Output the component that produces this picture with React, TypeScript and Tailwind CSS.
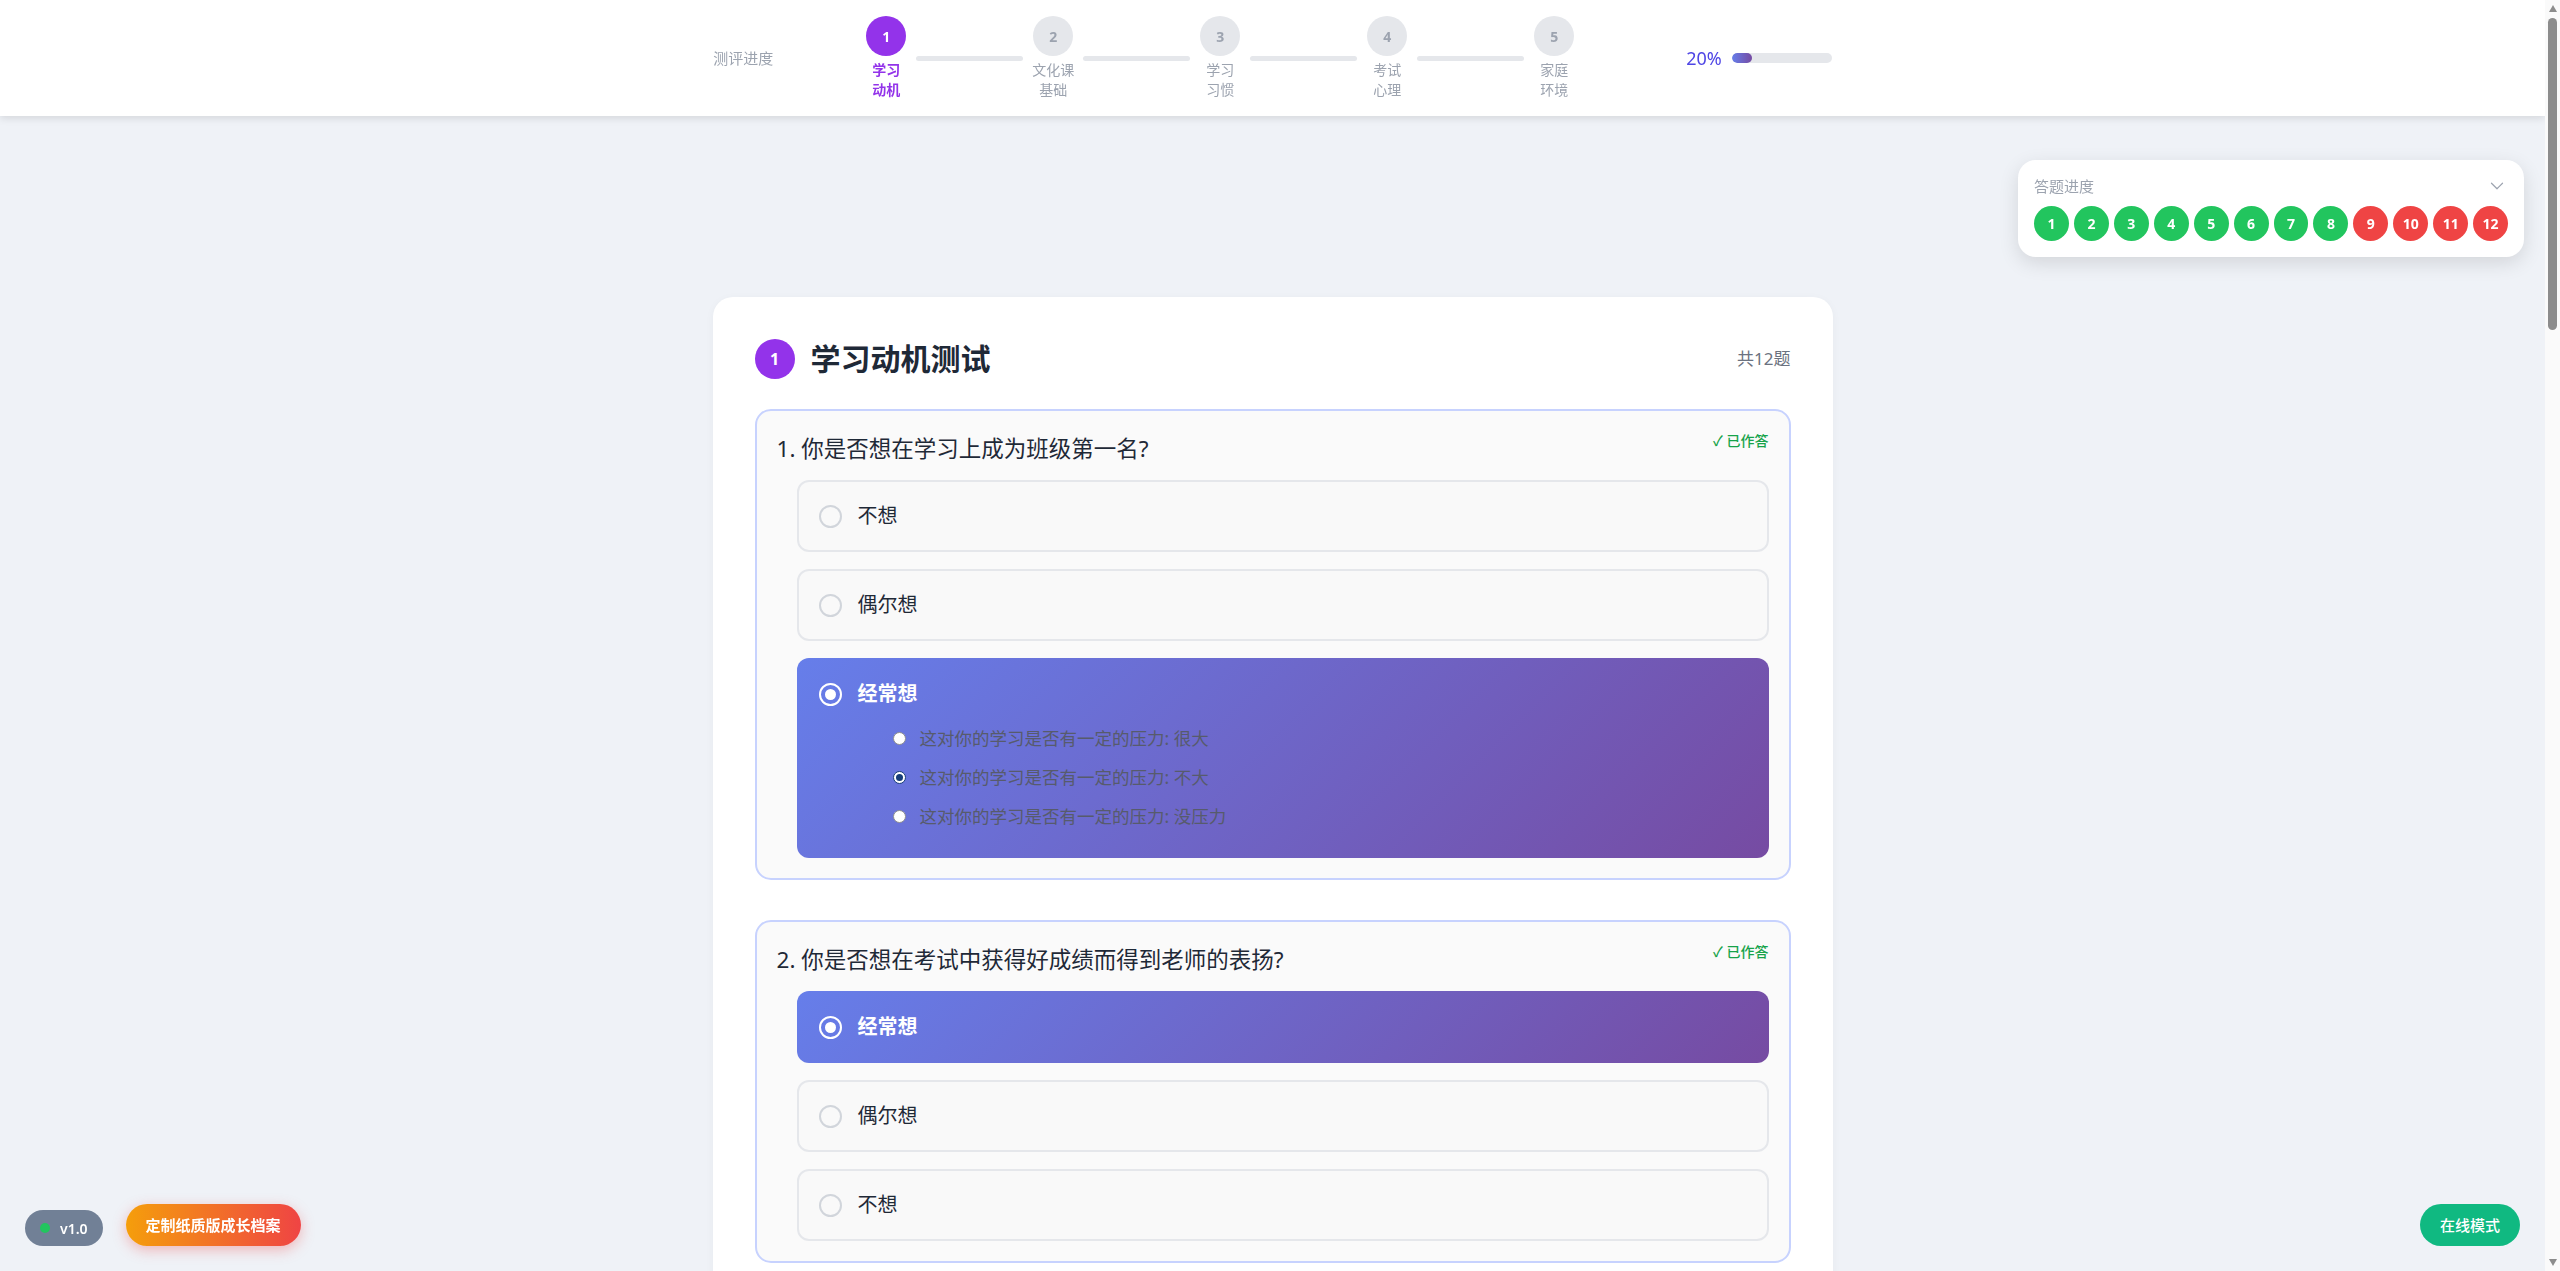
import { ChevronDown } from 'lucide-react'

type Sub = { text: string; checked: boolean }
type Option = { label: string; selected?: boolean; subs?: Sub[] }
type Question = { id: number; title: string; options: Option[] }

const steps = [
  { n: 1, lines: ['学习', '动机'] },
  { n: 2, lines: ['文化课', '基础'] },
  { n: 3, lines: ['学习', '习惯'] },
  { n: 4, lines: ['考试', '心理'] },
  { n: 5, lines: ['家庭', '环境'] },
]

// 1-8 已作答, 9-12 未作答
const progress = Array.from({ length: 12 }, (_, i) => ({ id: i + 1, done: i < 8 }))

const questions: Question[] = [
  {
    id: 1,
    title: '你是否想在学习上成为班级第一名?',
    options: [
      { label: '不想' },
      { label: '偶尔想' },
      {
        label: '经常想',
        selected: true,
        subs: [
          { text: '这对你的学习是否有一定的压力: 很大', checked: false },
          { text: '这对你的学习是否有一定的压力: 不大', checked: true },
          { text: '这对你的学习是否有一定的压力: 没压力', checked: false },
        ],
      },
    ],
  },
  {
    id: 2,
    title: '你是否想在考试中获得好成绩而得到老师的表扬?',
    options: [{ label: '经常想', selected: true }, { label: '偶尔想' }, { label: '不想' }],
  },
]

function OptionRow({ opt }: { opt: Option }) {
  if (opt.selected) {
    return (
      <div className="rounded-xl border-2 border-transparent bg-origin-border bg-[linear-gradient(135deg,#667eea_0%,#764ba2_100%)] px-5 py-5">
        <div className="flex h-7 items-center gap-4">
          <span className="flex h-[23px] w-[23px] items-center justify-center rounded-full border-2 border-white">
            <span className="h-[11px] w-[11px] rounded-full bg-white" />
          </span>
          <span className="text-[20px] font-semibold text-white">{opt.label}</span>
        </div>
        {opt.subs && (
          <div className="ml-[74px] mt-[11px] flex flex-col">
            {opt.subs.map((s) => (
              <div key={s.text} className="flex h-[39px] items-center gap-[14px]">
                {s.checked ? (
                  <span className="flex h-[13px] w-[13px] items-center justify-center rounded-full border-[1.5px] border-[#173d78] bg-white">
                    <span className="h-[7px] w-[7px] rounded-full bg-[#173d78]" />
                  </span>
                ) : (
                  <span className="h-[13px] w-[13px] rounded-full border border-[#8f8f8f] bg-white" />
                )}
                <span className="text-[17.5px] text-[#575b6c]">{s.text}</span>
              </div>
            ))}
          </div>
        )}
      </div>
    )
  }
  return (
    <div className="rounded-xl border-2 border-[#e5e7eb] bg-[#f9f9f9] px-5 py-5">
      <div className="flex h-7 items-center gap-4">
        <span className="h-[23px] w-[23px] rounded-full border-2 border-[#d1d5db] bg-[#f9f9f9]" />
        <span className="text-[20px] text-[#1f2937]">{opt.label}</span>
      </div>
    </div>
  )
}

export default function App() {
  return (
    <div className="h-screen overflow-hidden bg-[#eff2f7] pr-[15px] font-['Noto_Sans','Noto_Sans_CJK_SC',sans-serif]">
      {/* 顶部进度条 */}
      <header className="fixed left-0 right-[15px] top-0 z-40 h-[116px] bg-white shadow-[0_2px_8px_rgba(0,0,0,0.12)]">
        <div className="flex h-full items-center justify-center">
          <span className="text-[15px] text-[#9ca3af]">测评进度</span>
          <div className="ml-[93px] flex items-center">
            {steps.map((s, i) => (
              <div key={s.n} className="flex items-center">
                {i > 0 && <div className="mx-[10px] h-[5px] w-[107px] rounded-full bg-[#e5e7eb]" />}
                <div className="flex w-10 flex-col items-center">
                  <div
                    className={
                      s.n === 1
                        ? 'flex h-10 w-10 items-center justify-center rounded-full bg-[#9333ea] text-[14px] font-bold text-white'
                        : 'flex h-10 w-10 items-center justify-center rounded-full bg-[#e5e7eb] text-[14px] font-bold text-[#9ca3af]'
                    }
                  >
                    {s.n}
                  </div>
                  <div
                    className={
                      s.n === 1
                        ? 'mt-1 whitespace-nowrap text-center text-[14px] font-semibold leading-5 text-[#9333ea]'
                        : 'mt-1 whitespace-nowrap text-center text-[14px] leading-5 text-[#9ca3af]'
                    }
                  >
                    {s.lines[0]}
                    <br />
                    {s.lines[1]}
                  </div>
                </div>
              </div>
            ))}
          </div>
          <div className="ml-[112px] flex items-center gap-[10px]">
            <span className="text-[18px] text-[#4f46e5]">20%</span>
            <div className="h-[10px] w-[100px] overflow-hidden rounded-full bg-[#e5e7eb]">
              <div className="h-full w-[20%] rounded-full bg-[linear-gradient(90deg,#667eea,#764ba2)]" />
            </div>
          </div>
        </div>
      </header>

      {/* 答题进度 */}
      <aside className="fixed right-[36px] top-[160px] z-30 w-[506px] rounded-[18px] bg-white p-4 shadow-[0_6px_20px_rgba(0,0,0,0.12)]">
        <div className="flex h-5 items-center justify-between">
          <span className="text-[15px] text-[#9ca3af]">答题进度</span>
          <ChevronDown size={22} strokeWidth={1.3} className="text-[#9ca3af]" />
        </div>
        <div className="mt-[10px] flex gap-[5px]">
          {progress.map((p) => (
            <div
              key={p.id}
              className={
                p.done
                  ? 'flex h-[35px] w-[35px] items-center justify-center rounded-full bg-[#22c55e] text-[14px] font-bold text-white'
                  : 'flex h-[35px] w-[35px] items-center justify-center rounded-full bg-[#ef4444] text-[14px] font-bold text-white'
              }
            >
              {p.id}
            </div>
          ))}
        </div>
      </aside>

      <main className="pt-[297px]">
        <section className="mx-auto w-[1120px] rounded-[20px] bg-white p-[42px] shadow-[0_2px_10px_rgba(0,0,0,0.04)]">
          <div className="mb-[30px] flex items-center justify-between">
            <div className="flex items-center gap-4">
              <span className="flex h-10 w-10 items-center justify-center rounded-full bg-[#9333ea] text-[16px] font-bold text-white">
                1
              </span>
              <h2 className="text-[30px] font-bold leading-10 text-[#1f2937]">学习动机测试</h2>
            </div>
            <span className="text-[17px] text-[#6b7280]">共12题</span>
          </div>

          <div className="flex flex-col gap-10">
            {questions.map((q) => (
              <div key={q.id} className="relative rounded-2xl border-2 border-[#c7d2fe] bg-[#fafafa] p-5">
                <span className="absolute right-5 top-5 text-[14px] font-medium leading-5 text-[#16a34a]">✓ 已作答</span>
                <h3 className="mb-[13px] text-[22.5px] leading-9 text-[#1f2937]">
                  {q.id}. {q.title}
                </h3>
                <div className="ml-5 flex flex-col gap-[17px]">
                  {q.options.map((o) => (
                    <OptionRow key={o.label} opt={o} />
                  ))}
                </div>
              </div>
            ))}
          </div>
        </section>
      </main>

      {/* 底部按钮 */}
      <div className="fixed bottom-[25px] left-[25px] z-30 flex items-end gap-[23px]">
        <div className="flex h-9 items-center gap-[10px] rounded-full bg-[#718096] px-[15px]">
          <span className="h-[10px] w-[10px] rounded-full bg-[#22c55e]" />
          <span className="text-[14px] font-semibold text-white">v1.0</span>
        </div>
        <button className="h-[42px] w-[175px] rounded-full bg-[linear-gradient(90deg,#f59e0b,#ef4444)] text-[15px] font-semibold text-white shadow-[0_4px_14px_rgba(239,68,68,0.35)]">
          定制纸质版成长档案
        </button>
      </div>
      <button className="fixed bottom-[25px] right-[40px] z-30 h-[42px] w-[100px] rounded-full bg-[#10b981] text-[15px] font-medium text-white">
        在线模式
      </button>

      {/* 滚动条 */}
      <div className="fixed bottom-0 right-0 top-0 z-50 flex w-[15px] flex-col items-center bg-[#fafafa] py-[5px]">
        <span className="h-0 w-0 border-x-[4px] border-b-[7px] border-x-transparent border-b-[#8c8c8c]" />
        <span className="mt-[6px] h-[312px] w-[9px] rounded-full bg-[#8c8c8c]" />
        <span className="mt-auto h-0 w-0 border-x-[4px] border-t-[7px] border-x-transparent border-t-[#8c8c8c]" />
      </div>
    </div>
  )
}
